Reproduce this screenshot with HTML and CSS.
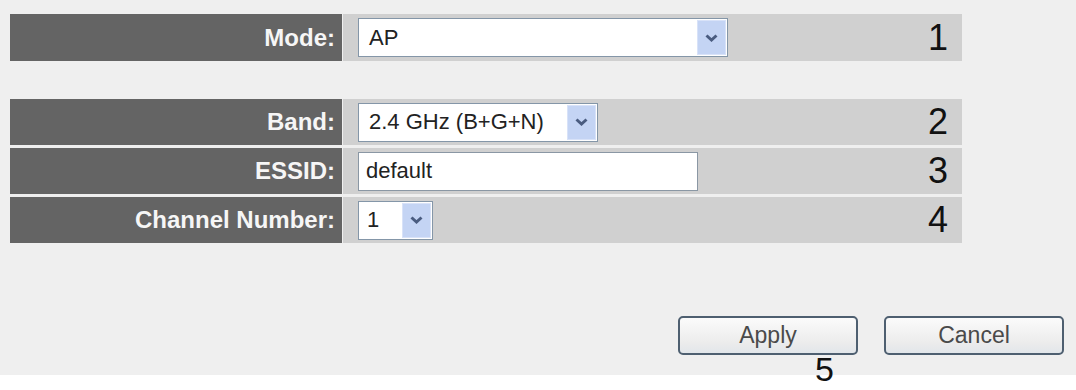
FILE: index.html
```html
<!DOCTYPE html>
<html>
<head>
<meta charset="utf-8">
<link rel="stylesheet" href="styles.css">
</head>
<body>
<div class="page">
  <div class="form">
    <div class="row row-mode">
      <div class="label">Mode:</div>
      <div class="value">
        <div class="select select-mode"><span class="sel-text">AP</span><span class="arrow"><svg width="13" height="8" viewBox="0 0 13 8"><path d="M1.5 1.5 L6.5 6 L11.5 1.5" fill="none" stroke="#4a5c80" stroke-width="3"/></svg></span></div>
        <span class="num">1</span>
      </div>
    </div>
    <div class="group">
      <div class="row">
        <div class="label">Band:</div>
        <div class="value">
          <div class="select select-band"><span class="sel-text">2.4 GHz (B+G+N)</span><span class="arrow"><svg width="13" height="8" viewBox="0 0 13 8"><path d="M1.5 1.5 L6.5 6 L11.5 1.5" fill="none" stroke="#4a5c80" stroke-width="3"/></svg></span></div>
          <span class="num">2</span>
        </div>
      </div>
      <div class="row">
        <div class="label">ESSID:</div>
        <div class="value">
          <div class="input"><span class="sel-text">default</span></div>
          <span class="num">3</span>
        </div>
      </div>
      <div class="row">
        <div class="label">Channel Number:</div>
        <div class="value">
          <div class="select select-chan"><span class="sel-text">1</span><span class="arrow"><svg width="13" height="8" viewBox="0 0 13 8"><path d="M1.5 1.5 L6.5 6 L11.5 1.5" fill="none" stroke="#4a5c80" stroke-width="3"/></svg></span></div>
          <span class="num">4</span>
        </div>
      </div>
    </div>
  </div>
  <div class="actions">
    <div class="btn-wrap">
      <div class="btn">Apply</div>
      <span class="num5">5</span>
    </div>
    <div class="btn">Cancel</div>
  </div>
  <div class="footer"></div>
</div>
</body>
</html>
```

FILE: styles.css
```css
html, body {
  margin: 0;
  padding: 0;
}
body {
  background: #efefef;
  font-family: "Liberation Sans", Arial, sans-serif;
  width: 1076px;
  height: 390px;
  overflow: hidden;
}
.page {
  display: flex;
  flex-direction: column;
  height: 390px;
}
.form {
  padding: 14px 0 0 10px;
  width: 952px;
}
.row {
  display: flex;
  height: 46px;
}
.row-mode {
  height: 47px;
}
.group {
  margin-top: 38px;
  display: flex;
  flex-direction: column;
  gap: 3px;
}
.label {
  width: 325px;
  padding-right: 7px;
  background: #646464;
  color: #f6f6f6;
  font-weight: bold;
  font-size: 24px;
  display: flex;
  align-items: center;
  justify-content: flex-end;
}
.value {
  flex: 1;
  margin-left: 1px;
  background: #d0d0d0;
  display: flex;
  align-items: center;
  padding-left: 15px;
  padding-right: 14px;
}
.num {
  margin-left: auto;
  font-size: 36px;
  color: #111;
  line-height: 1;
}
.select, .input {
  box-sizing: border-box;
  height: 39px;
  border: 1px solid #8496a8;
  background: #fff;
  display: flex;
  align-items: stretch;
  font-size: 22px;
  color: #222;
}
.sel-text {
  flex: 1;
  display: flex;
  align-items: center;
  padding-left: 10px;
  white-space: nowrap;
}
.arrow {
  width: 29px;
  margin: 1px;
  background: #c4d4f4;
  border: 1px solid #d8e2f8;
  box-sizing: border-box;
  display: flex;
  align-items: center;
  justify-content: center;
}
.select-mode { width: 370px; }
.select-band { width: 240px; }
.select-chan { width: 75px; }
.select-chan .sel-text { padding-left: 8px; }
.input {
  width: 340px;
  border-color: #8a97a4;
}
.input .sel-text { padding-left: 7px; }
.actions {
  margin-top: 73px;
  display: flex;
  justify-content: flex-end;
  gap: 26px;
  padding-right: 12px;
}
.btn-wrap {
  position: relative;
}
.btn {
  box-sizing: border-box;
  width: 180px;
  height: 39px;
  border: 2px solid #4e5f70;
  border-radius: 5px;
  background: linear-gradient(#fbfbfb, #ececec 70%, #e2e6ea);
  color: #4a4a4a;
  font-size: 23px;
  display: flex;
  align-items: center;
  justify-content: center;
}
.num5 {
  position: absolute;
  top: calc(100% - 5px);
  left: 137px;
  font-size: 34px;
  line-height: normal;
  color: #111;
}
.footer {
  margin-top: auto;
  height: 15px;
  background: #fff;
}
```
